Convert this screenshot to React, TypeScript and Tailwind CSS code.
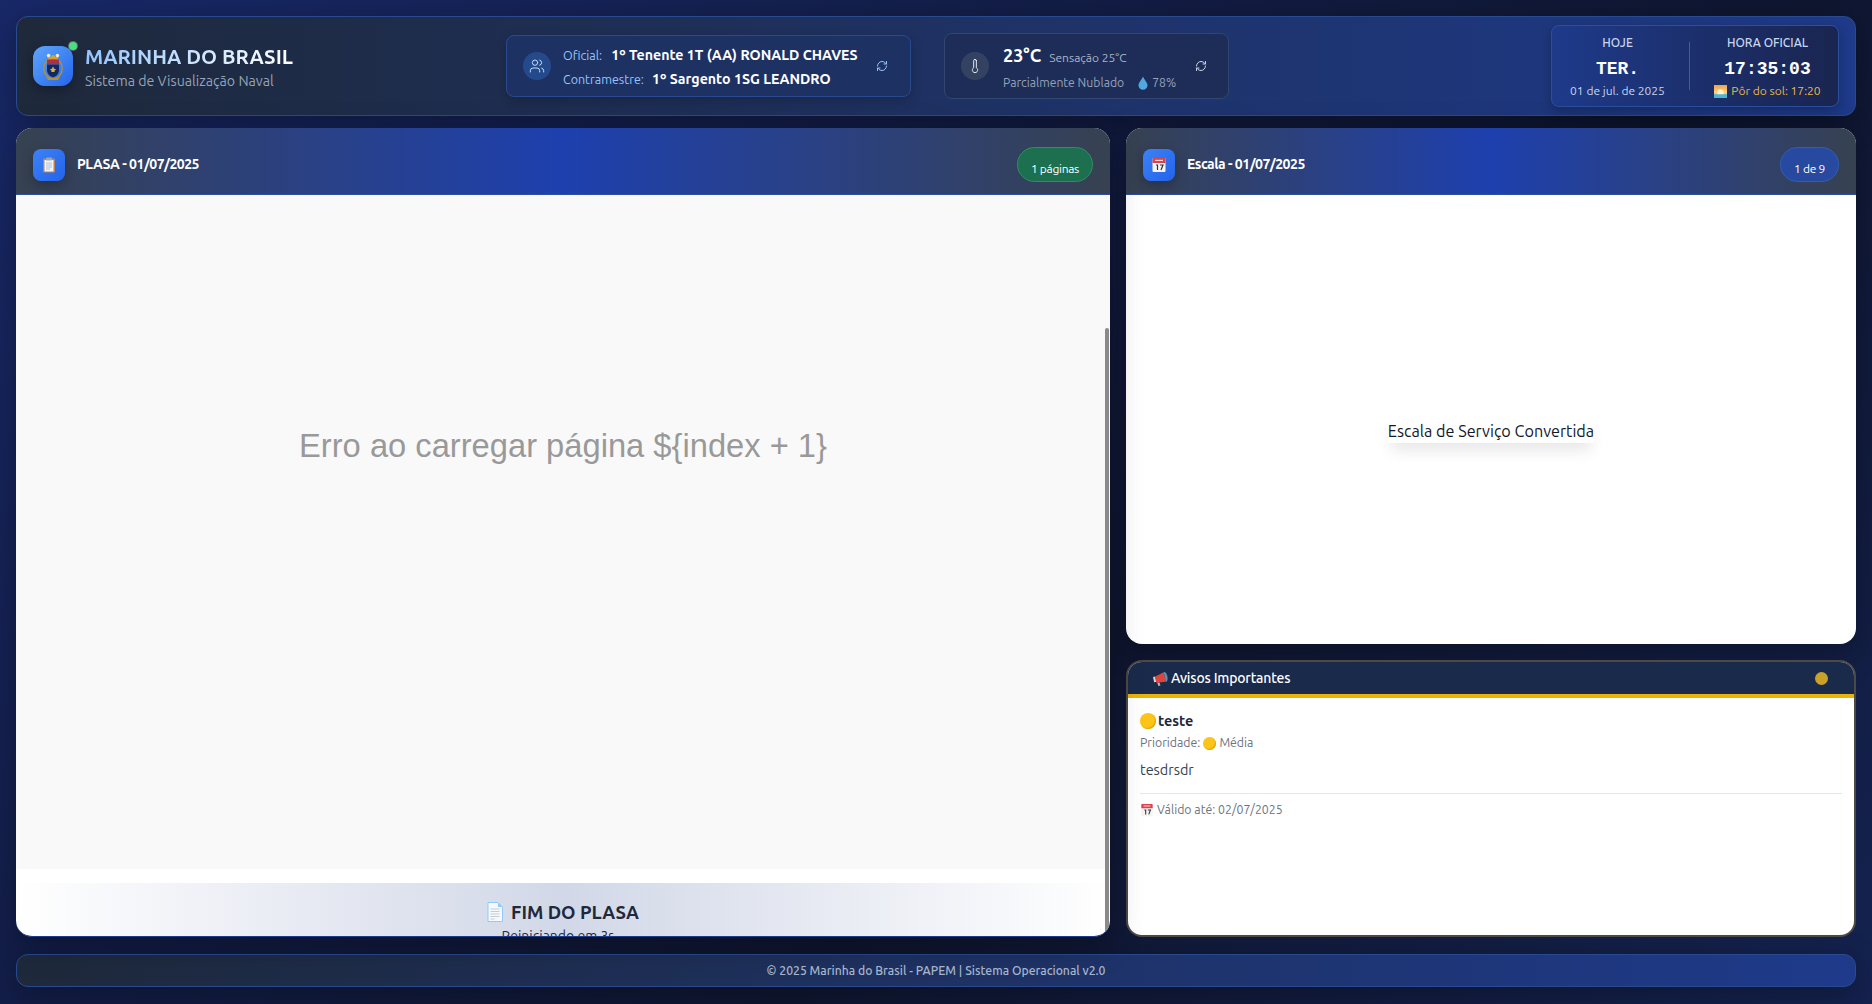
import { RefreshCw, Thermometer, Users } from "lucide-react";

const Crest = () => (
  <svg viewBox="0 0 40 40" className="h-[32px] w-[32px]">
    <ellipse cx="20" cy="23" rx="11.500" ry="13" fill="none" stroke="#b8912b" strokeWidth="1.600" />
    <path d="M12 7l2 4h12l2-4-4 2-4-3-4 3z" fill="#d9a520" />
    <circle cx="14.500" cy="7" r="2.200" fill="#e8e8e8" />
    <circle cx="25.500" cy="7" r="2.200" fill="#e8e8e8" />
    <rect x="12.500" y="12" width="15" height="6" fill="#a8324a" />
    <path d="M12.500 18h15v7c0 4-3 8-7.500 9-4.500-1-7.500-5-7.500-9z" fill="#14275e" />
    <path d="M20 20.500l1.500 3 2.500.5-2 1.500v2h-4v-2l-2-1.500 2.500-.5z" fill="#d9b340" />
    <path d="M11 34c3 2 15 2 18 0l-3 3.500H14z" fill="#b8912b" />
  </svg>
);

const Clipboard = () => (
  <svg viewBox="0 0 16 16" className="h-[16px] w-[16px]">
    <rect x="2" y="1.500" width="12" height="14" rx="1" fill="#b5835a" />
    <rect x="3.500" y="3" width="9" height="11.500" fill="#f1f5f9" />
    <rect x="5" y="0.500" width="6" height="3" rx="0.800" fill="#9aa5b1" />
    <path d="M5 6h6M5 8h6M5 10h6M5 12h4" stroke="#9fb4c7" strokeWidth="0.800" />
  </svg>
);

const Calendar = ({ size = 16 }: { size?: number }) => (
  <svg viewBox="0 0 16 16" width={size} height={size}>
    <rect x="1.500" y="1" width="13" height="14" rx="1" fill="#f4f4f4" />
    <path d="M1.500 2a1 1 0 0 1 1-1h11a1 1 0 0 1 1 1v4h-13z" fill="#d9434e" />
    <rect x="4" y="2.800" width="8" height="1.200" fill="#f8d0d0" />
    <path d="M5 8h1.500v5M9 8h3l-2 5" stroke="#333" strokeWidth="1.200" fill="none" />
  </svg>
);

const Megaphone = () => (
  <svg viewBox="0 0 16 16" className="h-[17px] w-[17px]">
    <path d="M1 6.500l2-.5 1 5-2 .5z" fill="#d9d9d9" />
    <path d="M3 6l8-4 2 9-9 1z" fill="#e0443e" />
    <path d="M11 2c1.500-.5 3 1.500 3.500 4s0 5-1.500 5.200z" fill="#5f8fa8" />
    <path d="M5 12l2-.3 1 3-2 .3z" fill="#b8b8b8" />
  </svg>
);

const Page = () => (
  <svg viewBox="0 0 16 20" className="h-[20px] w-[16px]">
    <path d="M1 .5h10l4.500 4.500v14.500H1z" fill="#f5f9fc" stroke="#90caf9" />
    <path d="M11 .5V5h4.500z" fill="#90caf9" />
    <path d="M3.500 7h9M3.500 9.500h9M3.500 12h9M3.500 14.500h9M3.500 17h4" stroke="#c4ccd4" />
  </svg>
);

const Sunset = () => (
  <svg viewBox="0 0 14 14" className="h-[13px] w-[13px]">
    <defs>
      <linearGradient id="sunsetSky" x1="0" y1="0" x2="0" y2="1">
        <stop offset="0" stopColor="#f59e42" />
        <stop offset="0.6" stopColor="#fbd38d" />
        <stop offset="0.75" stopColor="#7fd0d8" />
        <stop offset="1" stopColor="#3aa0c9" />
      </linearGradient>
    </defs>
    <rect width="14" height="14" fill="url(#sunsetSky)" />
    <circle cx="7" cy="8" r="3.500" fill="#fff3c4" />
    <rect y="10" width="14" height="4" fill="#4fb4cf" />
  </svg>
);

const Drop = () => (
  <svg viewBox="0 0 10 14" className="h-[14px] w-[10px]">
    <path d="M5 .5C6 3.500 9.500 6.500 9.500 9.300A4.500 4.500 0 0 1 .5 9.300C.5 6.500 4 3.500 5 .5z" fill="#4fa8e0" />
  </svg>
);

const Dot = ({ size }: { size: number }) => (
  <span className="inline-block shrink-0 rounded-full bg-[#fcc419] shadow-[inset_-1px_-1px_1px_#e0a800]" style={{ width: size, height: size }} />
);

const PanelHeader = ({ icon, title, badge, badgeClass }: { icon: React.ReactNode; title: string; badge: string; badgeClass: string }) => (
  <div className="flex h-[67px] shrink-0 items-center justify-between border-b border-[#2f4f9f] bg-[linear-gradient(90deg,#374151,#1e40af,#374151)] pl-[17px] pr-[17px] pt-[7px]">
    <div className="flex items-center gap-[12px]">
      <div className="flex h-[32px] w-[32px] items-center justify-center rounded-lg bg-gradient-to-br from-[#3b82f6] to-[#2563eb] shadow-[0_4px_12px_rgba(0,0,0,0.25)]">{icon}</div>
      <span className="text-[14px] font-bold tracking-[-0.5px] text-white">{title}</span>
    </div>
    <div className={`flex h-[35px] items-end rounded-full border px-[13px] pb-[3px] text-[12px] tracking-[-0.3px] text-white ${badgeClass}`}>{badge}</div>
  </div>
);

export default function App() {
  return (
    <div className="flex h-screen flex-col overflow-hidden bg-[linear-gradient(135deg,#182868,#0f1630_62%,#14224f)] px-[16px] pt-[16px] font-['Ubuntu','Noto_Sans',sans-serif]">
      {/* cabecalho */}
      <header className="flex h-[100px] shrink-0 items-center rounded-xl border border-[#2a4a8f] bg-[linear-gradient(90deg,#1e293b,#1e3a8a)] pl-[16px] pr-[16px] shadow-[0_8px_32px_rgba(0,0,0,0.3)]">
        <div className="flex w-[473px] shrink-0 items-center gap-[12px]">
          <div className="relative flex h-[40px] w-[40px] items-center justify-center rounded-xl bg-gradient-to-br from-[#60a5fa] to-[#2563eb] shadow-[0_4px_12px_rgba(0,0,0,0.3)]">
            <Crest />
            <span className="absolute -right-[4px] -top-[4px] h-[8px] w-[8px] rounded-full bg-[#4ade80] ring-1 ring-white/30" />
          </div>
          <div className="pt-[2px]">
            <div className="bg-[linear-gradient(90deg,#93c5fd,#ffffff)] bg-clip-text text-[20.400px] font-bold leading-[28px] text-transparent">MARINHA DO BRASIL</div>
            <div className="text-[14.200px] leading-[20px] text-[#94a3b8]">Sistema de Visualização Naval</div>
          </div>
        </div>

        <div className="flex h-[62px] w-[405px] shrink-0 items-center rounded-lg border border-[#2a4a8f] bg-[#1e3163] pl-[16px] pr-[22px] shadow-[0_4px_12px_rgba(0,0,0,0.2)]">
          <div className="flex h-[28px] w-[28px] shrink-0 items-center justify-center rounded-full bg-[#254a8c]">
            <Users className="h-[16px] w-[16px] text-[#bfdbfe]" strokeWidth={1.5} />
          </div>
          <div className="ml-[12px] flex flex-1 flex-col gap-[6px] pt-[2px]">
            <div className="flex items-center gap-[9px] text-[14.200px] leading-[18px]">
              <span className="text-[12.500px] text-[#93c5fd]">Oficial:</span>
              <span className="font-bold text-white">1º Tenente 1T (AA) RONALD CHAVES</span>
            </div>
            <div className="flex items-center gap-[8px] text-[14.200px] leading-[18px]">
              <span className="text-[12.500px] text-[#93c5fd]">Contramestre:</span>
              <span className="font-bold text-white">1º Sargento 1SG LEANDRO</span>
            </div>
          </div>
          <RefreshCw className="h-[12px] w-[12px] text-[#93c5fd]" />
        </div>

        <div className="ml-[33px] flex h-[66px] w-[285px] shrink-0 items-center rounded-lg border border-[#33466f] bg-[#1e2d57] pl-[16px] pr-[21px]">
          <div className="flex h-[28px] w-[28px] shrink-0 items-center justify-center rounded-full bg-[#334261]">
            <Thermometer className="h-[16px] w-[16px] text-[#e2e8f0]" strokeWidth={1.5} />
          </div>
          <div className="ml-[14px] flex flex-1 flex-col gap-[8px] pt-[2px]">
            <div className="flex items-baseline gap-[8px]">
              <span className="text-[18px] font-bold leading-[24px] text-white">23°C</span>
              <span className="text-[12px] text-[#a9b5c8]">Sensação 25°C</span>
            </div>
            <div className="flex items-center gap-[14px] text-[12.200px] leading-[16px] text-[#94a3b8]">
              <span>Parcialmente Nublado</span>
              <span className="flex items-center gap-[4px]"><Drop />78%</span>
            </div>
          </div>
          <RefreshCw className="h-[12px] w-[12px] text-[#cbd5e1]" />
        </div>

        <div className="ml-auto flex h-[82px] w-[288px] shrink-0 items-center rounded-lg border border-[#2a4f9f] bg-[linear-gradient(90deg,#1e3a8a,#1a2550)] shadow-[0_4px_12px_rgba(0,0,0,0.25)]">
          <div className="flex w-[137px] flex-col items-center pr-[6px] pt-[2px]">
            <span className="text-[12px] font-medium leading-[16px] text-[#c7d5ee]">HOJE</span>
            <span className="mt-[4px] font-['Liberation_Mono',monospace] text-[18px] font-bold leading-[28px] text-white">TER.</span>
            <span className="text-[12px] leading-[16px] text-[#c7d5ee]">01 de jul. de 2025</span>
          </div>
          <div className="h-[48px] w-px bg-[#335fb0]" />
          <div className="flex flex-1 flex-col items-center pl-[7px] pt-[2px]">
            <span className="text-[12px] font-medium leading-[16px] text-[#c7d5ee]">HORA OFICIAL</span>
            <span className="mt-[4px] font-['Liberation_Mono',monospace] text-[18px] font-bold leading-[28px] text-white">17:35:03</span>
            <span className="flex items-center gap-[4px] text-[12px] leading-[16px] text-[#eab84a]"><Sunset />Pôr do sol: 17:20</span>
          </div>
        </div>
      </header>

      <main className="mt-[12px] grid h-[809px] shrink-0 grid-cols-[1094px_730px] gap-[16px]">
        {/* PLASA */}
        <section className="relative flex flex-col overflow-hidden rounded-2xl border-b border-[#1e3a8a] bg-white shadow-[0_8px_32px_rgba(0,0,0,0.3)]">
          <PanelHeader icon={<Clipboard />} title="PLASA - 01/07/2025" badge="1 páginas" badgeClass="border-[#2f8f5f] bg-[#1c7050]" />
          <div className="relative flex-1 overflow-hidden">
            <div className="flex h-[674px] items-center justify-center bg-[#f9f9f9] pb-[172px] font-['Liberation_Sans',sans-serif] text-[32.700px] text-[#999999]">Erro ao carregar página {"${index + 1}"}</div>
            <div className="mt-[14px] flex flex-col items-center bg-[linear-gradient(90deg,transparent,rgba(30,58,138,0.2),transparent)] pt-[15px]">
              <div className="flex items-center gap-[8px] text-[18.400px] font-bold leading-[28px] text-[#1e293b]"><Page />FIM DO PLASA</div>
              <div className="mr-[10px] text-[14px] text-[#1e293b]">Reiniciando em 3s</div>
            </div>
            <div className="absolute bottom-0 right-[1px] top-[133px] w-[4px] rounded-t-sm bg-[#8a8a8a]" />
          </div>
        </section>

        {/* coluna direita */}
        <div className="flex min-h-0 flex-col gap-[16px]">
          <section className="flex h-[516px] shrink-0 flex-col overflow-hidden rounded-2xl bg-white shadow-[0_8px_32px_rgba(0,0,0,0.3)]">
            <PanelHeader icon={<Calendar />} title="Escala - 01/07/2025" badge="1 de 9" badgeClass="border-[#2f5fb5] bg-[#27499f]" />
            <div className="flex flex-1 items-center justify-center pt-[23px]">
              <span className="bg-white text-[16.200px] leading-[24px] text-[#111827] shadow-[0_10px_15px_-3px_rgba(0,0,0,0.1)]">Escala de Serviço Convertida</span>
            </div>
          </section>

          <section className="flex flex-1 flex-col overflow-hidden rounded-2xl border-2 border-[#4d4a44] bg-white">
            <div className="flex h-[32px] shrink-0 items-center justify-between bg-[#1a2a4a] pl-[24px] pr-[26px] pt-[1px]">
              <span className="flex items-center gap-[2px] text-[14px] font-medium tracking-[-0.2px] text-white"><Megaphone />Avisos Importantes</span>
              <span className="h-[13px] w-[13px] rounded-full bg-[#c9a227]" />
            </div>
            <div className="h-[4px] shrink-0 bg-[#eab308]" />
            <div className="flex flex-col px-[12px] pt-[13px]">
              <div className="flex items-center gap-[2px] text-[14.400px] font-bold leading-[20px] text-[#1e293b]"><Dot size={16} />teste</div>
              <div className="mt-[2px] flex items-center gap-[3px] text-[12.300px] leading-[20px] text-[#6b7280]">Prioridade: <Dot size={13} /> Média</div>
              <div className="mt-[5px] text-[14.400px] leading-[24px] text-[#374151]">tesdrsdr</div>
              <div className="mt-[11px] border-t border-[#e5e7eb] pt-[8px]">
                <div className="flex items-center gap-[3px] text-[12.300px] leading-[16px] text-[#6b7280]"><Calendar size={14} />Válido até: 02/07/2025</div>
              </div>
            </div>
          </section>
        </div>
      </main>

      <footer className="mt-[17px] flex h-[33px] shrink-0 items-center justify-center rounded-xl border border-[#2a4a8f] bg-[linear-gradient(90deg,#1e293b,#1e3a8a)] pt-[1px] text-[12.200px] font-medium text-[#a9b8d0] shadow-[0_8px_32px_rgba(0,0,0,0.3)]">
        © 2025 Marinha do Brasil - PAPEM | Sistema Operacional v2.0
      </footer>
    </div>
  );
}
